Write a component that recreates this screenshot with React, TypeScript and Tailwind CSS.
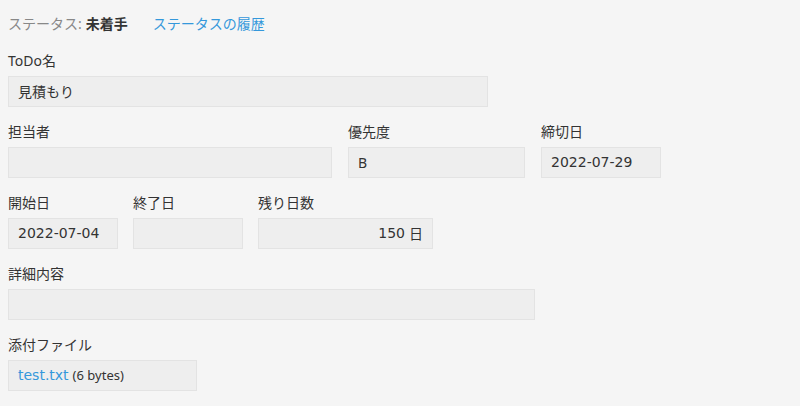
import React from "react";

const font = { fontFamily: '"Noto Sans", "Noto Sans CJK JP", sans-serif' };
const numFont = { fontFamily: '"DejaVu Sans", "Noto Sans CJK JP", sans-serif' };

function Field({
  label,
  width,
  children,
  right,
}: {
  label: string;
  width: string;
  children?: React.ReactNode;
  right?: boolean;
}) {
  return (
    <div className={`flex flex-col ${width}`}>
      <div className="h-5 leading-5 text-[14px] text-[#333]">{label}</div>
      <div
        className={`mt-[5px] h-[31px] flex items-center border border-[#e3e3e3] bg-[#eeeeee] px-[9px] text-[14px] text-[#333] ${
          right ? "justify-end" : ""
        }`}
      >
        {children}
      </div>
    </div>
  );
}

export default function App() {
  return (
    <div className="min-h-[406px] w-[800px] bg-[#f5f5f5] px-2 pt-[14px]" style={font}>
      {/* Status */}
      <div className="flex h-5 items-center text-[14px] leading-5">
        <span className="text-[#888]">ステータス:</span>
        <span className="ml-1 font-bold text-[#333]">未着手</span>
        <span className="ml-[25px] text-[#3498db]">ステータスの履歴</span>
      </div>

      <div className="mt-[17px] flex flex-col gap-[15px]">
        <div className="flex">
          <Field label="ToDo名" width="w-[480px]">見積もり</Field>
        </div>

        <div className="flex gap-4">
          <Field label="担当者" width="w-[324px]" />
          <Field label="優先度" width="w-[177px]">B</Field>
          <Field label="締切日" width="w-[120px]">
            <span style={numFont}>2022-07-29</span>
          </Field>
        </div>

        <div className="flex gap-[15px]">
          <Field label="開始日" width="w-[110px]">
            <span style={numFont}>2022-07-04</span>
          </Field>
          <Field label="終了日" width="w-[110px]" />
          <Field label="残り日数" width="w-[175px]" right>
            <span style={numFont}>150</span>
            <span className="ml-1">日</span>
          </Field>
        </div>

        <div className="flex">
          <Field label="詳細内容" width="w-[527px]" />
        </div>

        <div className="flex">
          <Field label="添付ファイル" width="w-[189px]">
            <span className="text-[#3498db]" style={numFont}>test.txt</span>
            <span className="ml-1 text-[13px] text-[#333]">(6 bytes)</span>
          </Field>
        </div>
      </div>
    </div>
  );
}
